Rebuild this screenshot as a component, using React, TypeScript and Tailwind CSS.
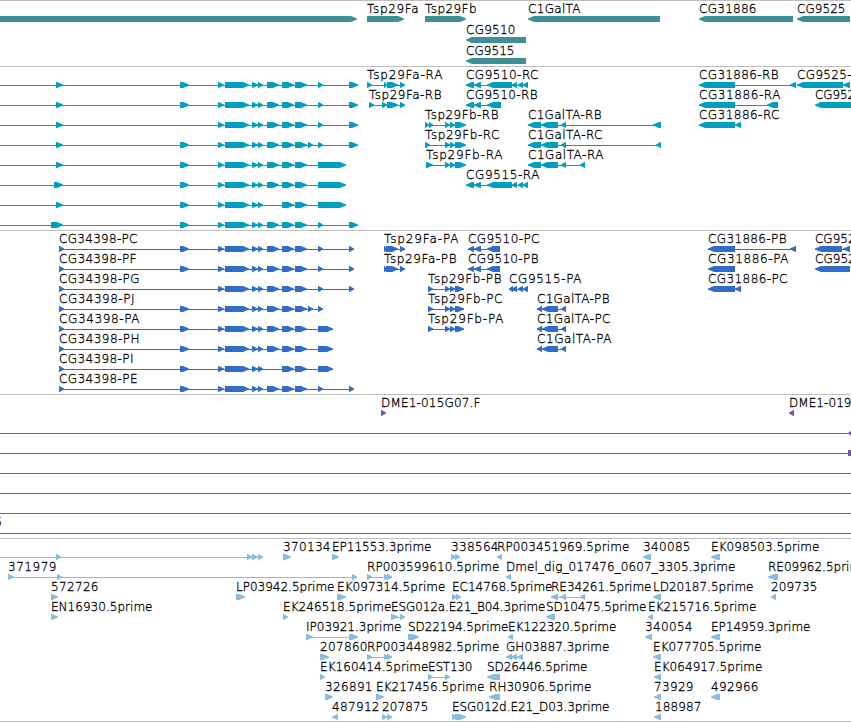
import React from "react";

type Span = [number, number];
type Feature = {
  row: number;
  spans: Span[];
  dir?: "left" | "right";
  from?: number;
  label?: string;
  x?: number;
  end?: number;
};

const FONT =
  "font-['DejaVu_Sans','Noto_Sans',sans-serif] text-[12px] font-extralight fill-black stroke-black [stroke-width:0.3px]";

function arrow([a, b]: Span, mid: number, dir: "left" | "right") {
  const top = mid - 3;
  const bottom = mid + 3;
  const head = Math.min(6, b - a - 0.5);
  if (dir === "right") {
    const n = b - head;
    return `M${a} ${top}H${n}L${b} ${mid - 0.5}V${mid + 0.5}L${n} ${bottom}H${a}Z`;
  }
  const n = a + head;
  return `M${b} ${top}H${n}L${a} ${mid - 0.5}V${mid + 0.5}L${n} ${bottom}H${b}Z`;
}

function Track({
  height,
  first,
  step,
  color,
  features,
  className,
  children,
}: {
  height: number;
  first: number;
  step: number;
  color: string;
  features: Feature[];
  className: string;
  children?: React.ReactNode;
}) {
  return (
    <section className={`border-t border-[#bebebe] ${className}`}>
      <svg width="851" height={height} viewBox={`0 0 851 ${height}`} className="block">
        {features.map((f, i) => {
          const mid = first + f.row * step;
          const dir = f.dir ?? "right";
          const start = f.from ?? f.spans[0][0];
          const stop = f.spans[f.spans.length - 1][1];
          return (
            <g key={i}>
              {f.spans.length + (f.from === undefined ? 0 : 1) > 1 && (
                <rect x={start} y={mid} width={stop - start} height="1" fill={color} />
              )}
              <path d={f.spans.map((s) => arrow(s, mid, dir)).join("")} fill={color} />
              {f.label && (
                <text
                  x={f.x ?? start}
                  y={mid - 6}
                  textLength={f.end ? f.end - (f.x ?? start) + 0.5 : undefined}
                  lengthAdjust="spacing"
                  className={FONT}
                >
                  {f.label}
                </text>
              )}
            </g>
          );
        })}
        {children}
      </svg>
    </section>
  );
}

const genes: Feature[] = [
  { row: 0, spans: [[-10, 357]] },
  { row: 0, spans: [[367, 404]], label: "Tsp29Fa", end: 418 },
  { row: 0, spans: [[425, 466]], label: "Tsp29Fb", end: 476 },
  { row: 1, dir: "left", spans: [[466, 526]], label: "CG9510", end: 515 },
  { row: 2, dir: "left", spans: [[466, 526]], label: "CG9515", end: 514 },
  { row: 0, dir: "left", spans: [[528, 660]], label: "C1GalTA", end: 580 },
  { row: 0, dir: "left", spans: [[699, 793]], label: "CG31886", end: 756 },
  { row: 0, dir: "left", spans: [[797, 850]], label: "CG9525", end: 845 },
];

const core: Span[] = [[218, 224], [225, 249], [252, 258], [258, 263]];
const e180: Span = [180, 189];
const e267: Span = [267, 279];
const pair: Span[] = [[282, 294], [295, 307]];
const e308: Span = [308, 313];
const e318: Span = [318, 323];

const cg9510: Span[] = [[466, 474], [474, 481], [487, 512], [512, 517], [518, 523], [523, 528]];
const fb: Span[] = [[445, 450], [450, 455], [455, 466]];
const gal: Span[] = [[528, 541], [541, 558], [561, 566]];

const transcripts: Feature[] = [
  { row: 0, from: -1, spans: [[56, 63], e180, ...core, e267, ...pair, e318, [349, 358]] },
  { row: 1, from: -1, spans: [[56, 63], e180, ...core, e267, ...pair, e318, [349, 358]] },
  { row: 2, from: -1, spans: [[56, 63], ...core, e267, ...pair, e318, [349, 358]] },
  { row: 3, from: -1, spans: [[56, 63], e180, ...core, e267, ...pair, e308, e318, [349, 358]] },
  { row: 4, from: -1, spans: [[56, 63], e180, ...core, e267, ...pair, [318, 346]] },
  { row: 5, from: -1, spans: [[54, 63], e180, ...core, e267, ...pair, [318, 346]] },
  { row: 6, from: -1, spans: [[56, 63], e180, ...core, ...pair, [318, 346]] },
  { row: 7, from: -1, spans: [[51, 63], e180, ...core, e267, ...pair, e318, [349, 358]] },
  { row: 0, spans: [[367, 372], [384, 387], [387, 398], [400, 405]], label: "Tsp29Fa-RA", end: 442 },
  { row: 1, spans: [[369, 374], [382, 387], [387, 398], [400, 405]], label: "Tsp29Fa-RB", end: 441 },
  { row: 2, spans: [[425, 429], [429, 433], ...fb], label: "Tsp29Fb-RB", end: 498 },
  { row: 3, spans: [[425, 430], ...fb], label: "Tsp29Fb-RC", end: 499 },
  { row: 4, spans: [[426, 433], ...fb], label: "Tsp29Fb-RA", end: 502 },
  { row: 0, dir: "left", spans: cg9510, label: "CG9510-RC", end: 538 },
  { row: 1, dir: "left", spans: [[466, 474], [474, 481], [487, 501]], label: "CG9510-RB", end: 537 },
  { row: 5, dir: "left", spans: cg9510, label: "CG9515-RA", end: 539 },
  { row: 2, dir: "left", spans: [...gal, [653, 661]], label: "C1GalTA-RB", end: 601 },
  { row: 3, dir: "left", spans: [...gal, [656, 661]], label: "C1GalTA-RC", end: 602 },
  { row: 4, dir: "left", spans: [...gal, [580, 585]], label: "C1GalTA-RA", end: 603 },
  { row: 0, dir: "left", spans: [[699, 735], [790, 796]], label: "CG31886-RB", end: 778 },
  { row: 1, dir: "left", spans: [[699, 735], [767, 778]], label: "CG31886-RA", end: 780 },
  { row: 2, dir: "left", spans: [[699, 735], [735, 741]], label: "CG31886-RC", end: 779 },
  { row: 0, dir: "left", spans: [[797, 843], [843, 850]], label: "CG9525-RB", end: 868 },
  { row: 1, dir: "left", spans: [[815, 860]], label: "CG9525-RA", end: 882 },
];

const fbP: Span[] = [[428, 433], [445, 450], [450, 455], [455, 464]];
const galP: Span[] = [[537, 542], [542, 558], [561, 566]];

const proteins: Feature[] = [
  { row: 0, spans: [[59, 64], e180, ...core, e267, ...pair, e318, [349, 354]], label: "CG34398-PC", end: 137 },
  { row: 1, spans: [[59, 64], e180, ...core, e267, ...pair, e318, [349, 354]], label: "CG34398-PF", end: 136 },
  { row: 2, spans: [[59, 64], ...core, e267, ...pair, e318, [349, 354]], label: "CG34398-PG", end: 139 },
  { row: 3, spans: [[59, 64], e180, ...core, e267, ...pair, e308, e318], label: "CG34398-PJ", end: 134 },
  { row: 4, spans: [[59, 64], e180, ...core, e267, ...pair, [318, 333]], label: "CG34398-PA", end: 139 },
  { row: 5, spans: [[59, 64], e180, ...core, e267, ...pair, [318, 333]], label: "CG34398-PH", end: 139 },
  { row: 6, spans: [[59, 64], e180, ...core, ...pair, [318, 333]], label: "CG34398-PI", end: 133 },
  { row: 7, spans: [[59, 64], e180, ...core, e267, ...pair, e318, [349, 354]], label: "CG34398-PE", end: 137 },
  { row: 0, spans: [[384, 387], [386, 398], [400, 405]], label: "Tsp29Fa-PA", end: 458 },
  { row: 1, spans: [[384, 387], [386, 398], [400, 405]], label: "Tsp29Fa-PB", end: 456 },
  { row: 2, spans: fbP, label: "Tsp29Fb-PB", end: 501 },
  { row: 3, spans: fbP, label: "Tsp29Fb-PC", end: 502 },
  { row: 4, spans: fbP, label: "Tsp29Fb-PA", end: 503 },
  { row: 0, dir: "left", spans: [[468, 474], [474, 481], [487, 500]], label: "CG9510-PC", end: 539 },
  { row: 1, dir: "left", spans: [[468, 474], [474, 481], [487, 500]], label: "CG9510-PB", end: 538 },
  { row: 2, dir: "left", spans: [[509, 513], [512, 517], [518, 523], [523, 528]], label: "CG9515-PA", end: 581 },
  { row: 3, dir: "left", spans: galP, label: "C1GalTA-PB", end: 609 },
  { row: 4, dir: "left", spans: galP, label: "C1GalTA-PC", end: 610 },
  { row: 5, dir: "left", spans: galP, label: "C1GalTA-PA", end: 611 },
  { row: 0, dir: "left", spans: [[708, 735], [790, 796]], label: "CG31886-PB", end: 786 },
  { row: 1, dir: "left", spans: [[708, 735]], label: "CG31886-PA", end: 788 },
  { row: 2, dir: "left", spans: [[708, 735], [735, 741]], label: "CG31886-PC", end: 787 },
  { row: 0, dir: "left", spans: [[815, 842], [843, 850]], label: "CG9525-PB", end: 882 },
  { row: 1, dir: "left", spans: [[815, 850]], label: "CG9525-PA", end: 882 },
];

const clones: Feature[] = [
  { row: 0, spans: [[381, 386]], label: "DME1-015G07.F", end: 480 },
  { row: 0, dir: "left", spans: [[789, 794]], label: "DME1-019G01.R", end: 888 },
];

const ests: Feature[] = [
  { row: 0, from: -1, spans: [[56, 61], [247, 252], [252, 258], [258, 263]] },
  { row: 0, spans: [[283, 291]], label: "370134", end: 330 },
  { row: 0, spans: [[332, 339]], label: "EP11553.3prime", end: 431 },
  { row: 0, spans: [[451, 456], [455, 460]], label: "338564", end: 498 },
  { row: 0, dir: "left", spans: [[497, 502]], label: "RP003451969.5prime", end: 629 },
  { row: 0, dir: "left", spans: [[643, 651]], label: "340085", end: 690 },
  { row: 0, dir: "left", spans: [[711, 720]], label: "EK098503.5prime", end: 819 },
  { row: 1, spans: [[8, 14], [57, 62], [352, 357]], label: "371979", end: 56 },
  { row: 1, spans: [[367, 372], [384, 389], [387, 392]], label: "RP003599610.5prime", end: 499 },
  { row: 1, dir: "left", spans: [[506, 511]], label: "Dmel_dig_017476_0607_3305.3prime", end: 735 },
  { row: 1, dir: "left", spans: [[768, 778]], label: "RE09962.5prime", end: 868 },
  { row: 2, spans: [[51, 58]], label: "572726", end: 98 },
  { row: 2, spans: [[236, 245]], label: "LP03942.5prime", end: 334 },
  { row: 2, spans: [[337, 346]], label: "EK097314.5prime", end: 445 },
  { row: 2, spans: [[452, 457], [456, 461]], label: "EC14768.5prime", end: 552 },
  { row: 2, dir: "left", spans: [[551, 558], [560, 566], [580, 585]], label: "RE34261.5prime", end: 651 },
  { row: 2, dir: "left", spans: [[653, 661]], label: "LD20187.5prime", end: 753 },
  { row: 2, dir: "left", spans: [[771, 776]], label: "209735", end: 817 },
  { row: 3, spans: [[51, 58]], label: "EN16930.5prime", end: 152 },
  { row: 3, spans: [[283, 288]], label: "EK246518.5prime", end: 391 },
  { row: 3, spans: [[391, 398], [400, 405]], label: "ESG012a.E21_B04.3prime", end: 545 },
  { row: 3, dir: "left", spans: [[546, 555]], label: "SD10475.5prime", end: 646 },
  { row: 3, dir: "left", spans: [[648, 653]], label: "EK215716.5prime", end: 756 },
  { row: 4, spans: [[306, 313], [349, 358]], label: "IP03921.3prime", end: 401 },
  { row: 4, spans: [[408, 419]], label: "SD22194.5prime", end: 508 },
  { row: 4, dir: "left", spans: [[508, 513]], label: "EK122320.5prime", end: 616 },
  { row: 4, dir: "left", spans: [[645, 652]], label: "340054", end: 692 },
  { row: 4, dir: "left", spans: [[711, 720]], label: "EP14959.3prime", end: 810 },
  { row: 5, spans: [[320, 329]], label: "207860", end: 367 },
  { row: 5, spans: [[367, 372], [384, 389], [387, 392]], label: "RP003448982.5prime", end: 499 },
  { row: 5, dir: "left", spans: [[506, 512], [511, 517], [517, 523]], label: "GH03887.3prime", end: 609 },
  { row: 5, dir: "left", spans: [[653, 661]], label: "EK077705.5prime", end: 761 },
  { row: 6, spans: [[320, 325]], label: "EK160414.5prime", end: 428 },
  { row: 6, spans: [[428, 433], [445, 450]], label: "EST130", end: 472 },
  { row: 6, dir: "left", spans: [[487, 500]], label: "SD26446.5prime", end: 587 },
  { row: 6, dir: "left", spans: [[654, 661]], label: "EK064917.5prime", end: 762 },
  { row: 7, spans: [[325, 333]], label: "326891", end: 372 },
  { row: 7, spans: [[376, 384]], label: "EK217456.5prime", end: 484 },
  { row: 7, dir: "left", spans: [[489, 500]], label: "RH30906.5prime", end: 591 },
  { row: 7, dir: "left", spans: [[654, 661]], label: "73929", end: 693 },
  { row: 7, dir: "left", spans: [[711, 720]], label: "492966", end: 758 },
  { row: 8, dir: "left", spans: [[332, 338]], label: "487912", end: 379 },
  { row: 8, spans: [[382, 387], [387, 392]], label: "207875", end: 428 },
  { row: 8, spans: [[452, 457], [455, 466]], label: "ESG012d.E21_D03.3prime", end: 609 },
  { row: 8, dir: "left", spans: [[654, 661]], label: "188987", x: 655, end: 701 },
];

export default function App() {
  return (
    <main className="flex h-[722px] w-[851px] flex-col overflow-hidden bg-white">
      <Track className="h-[66px]" height={65} first={18} step={21} color="#3f8f96" features={genes} />
      <Track className="h-[164px]" height={163} first={18} step={20} color="#009fc1" features={transcripts} />
      <Track className="h-[164px]" height={163} first={18} step={20} color="#306ccc" features={proteins} />
      <Track className="h-[144px]" height={143} first={18} step={20} color="#7658a9" features={clones}>
        {[38, 58, 78, 98, 118, 138].map((y) => (
          <rect key={y} x="0" y={y} width="851" height="1" fill="#7658a9" />
        ))}
        <path d="M848 38L851 36V41Z" fill="#7658a9" />
        <rect x="848" y="55" width="3" height="6" fill="#7658a9" />
        <text x="-5.5" y="131" className={FONT}>
          5
        </text>
      </Track>
      <Track className="h-[183px]" height={182} first={18} step={20} color="#88bddf" features={ests} />
      <div className="h-px bg-[#bebebe]" />
    </main>
  );
}
